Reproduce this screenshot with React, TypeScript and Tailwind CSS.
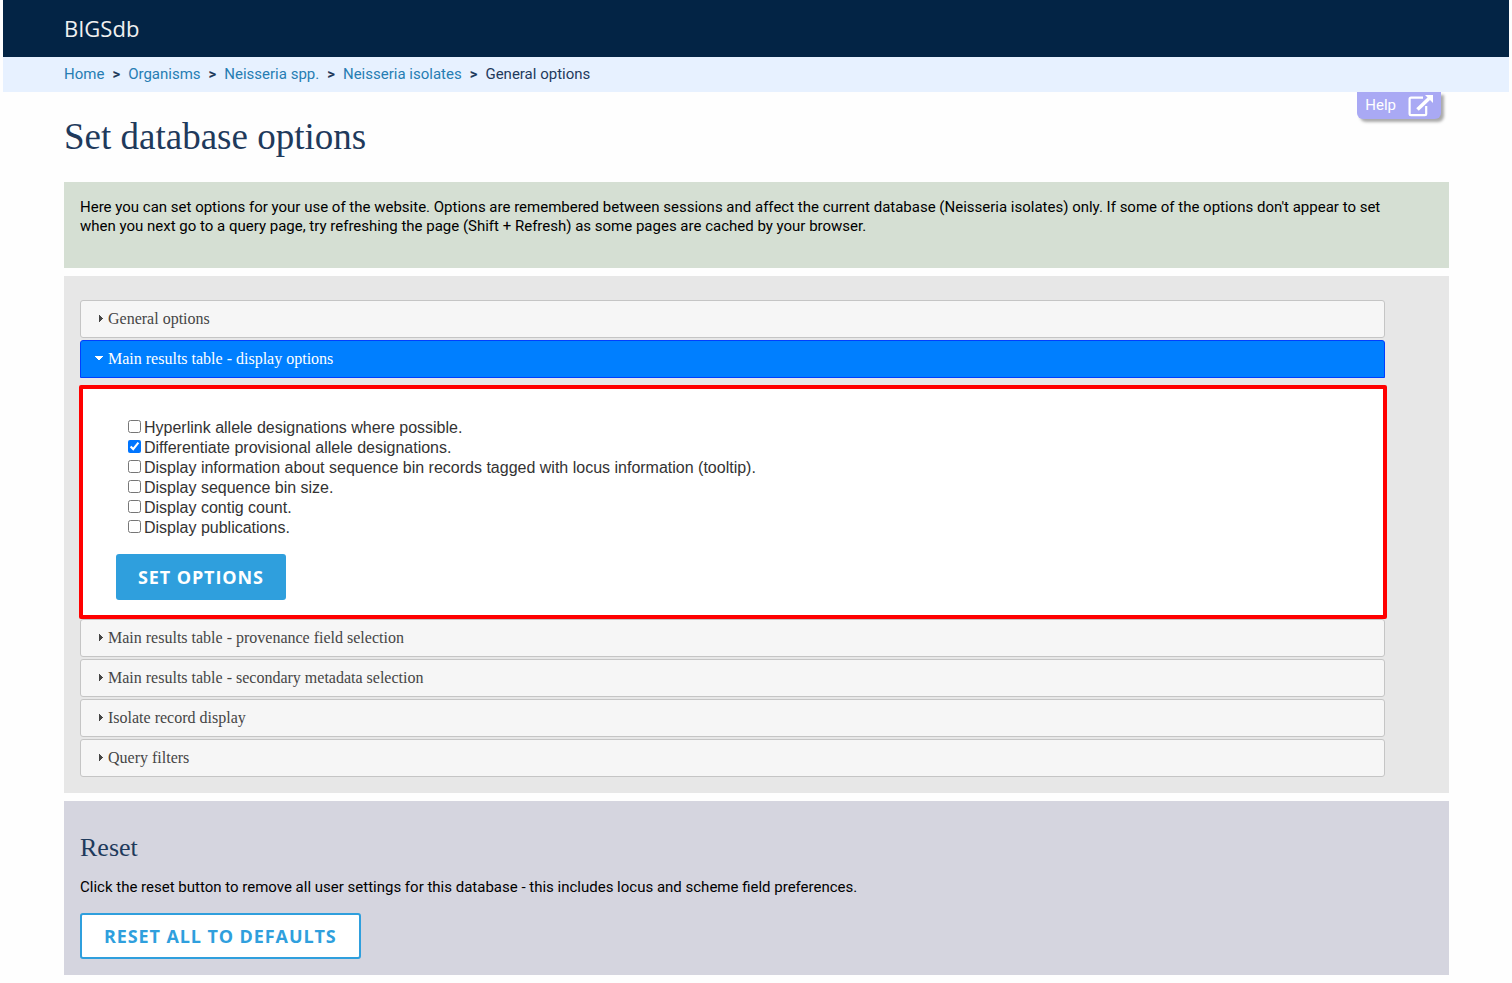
import React, { useState } from 'react';

interface DisplayOption {
  id: string;
  label: string;
}

interface SectionHeaderProps {
  title: string;
  open?: boolean;
  onClick: () => void;
}

const crumbs = ['Home', 'Organisms', 'Neisseria spp.', 'Neisseria isolates'];

const displayOptions: DisplayOption[] = [
  { id: 'hyperlink', label: 'Hyperlink allele designations where possible.' },
  { id: 'provisional', label: 'Differentiate provisional allele designations.' },
  { id: 'seqbin', label: 'Display information about sequence bin records tagged with locus information (tooltip).' },
  { id: 'binsize', label: 'Display sequence bin size.' },
  { id: 'contigs', label: 'Display contig count.' },
  { id: 'publications', label: 'Display publications.' }
];

const sections = [
  'General options',
  'Main results table - display options',
  'Main results table - provenance field selection',
  'Main results table - secondary metadata selection',
  'Isolate record display',
  'Query filters'
];

const DISPLAY_SECTION = 1;

const SectionHeader: React.FC<SectionHeaderProps> = ({ title, open = false, onClick }) => (
  <h3>
    <button
      type="button"
      aria-expanded={open}
      onClick={onClick}
      className={`flex h-[38px] w-full items-center border pl-3 text-left font-['Liberation_Serif',serif] text-base ${
        open
          ? 'rounded-t-[3px] border-[#003eff] bg-[#007fff] text-white'
          : 'rounded-[3px] border-[#c5c5c5] bg-[#f6f6f6] text-[#454545]'
      }`}
    >
      <svg width="15" height="16" viewBox="0 0 15 16" fill="currentColor" aria-hidden="true">
        {open ? <path d="M2 5h8v1H9v1H8v1H7v1H5V8H4V7H3V6H2z" /> : <path d="M6 4h1v1h1v1h1v1h1v1H9v1H8v1H7v1H6z" />}
      </svg>
      {title}
    </button>
  </h3>
);

const DisplayPanel: React.FC = () => {
  const [checked, setChecked] = useState<string[]>(['provisional']);

  const toggle = (id: string) => {
    setChecked((prev) => (prev.includes(id) ? prev.filter((c) => c !== id) : [...prev, id]));
  };

  return (
    <div className="-mr-0.5 -mb-0.5 -ml-px mt-[5px] rounded-xs border-4 border-[#ff0000] bg-white px-[33px] pt-[29px] pb-[15px]">
      <ul className="pl-3 font-['Liberation_Sans',sans-serif] text-base leading-5 text-[#333333]">
        {displayOptions.map((option) => (
          <li key={option.id} className="flex gap-[3px]">
            <input
              type="checkbox"
              id={option.id}
              checked={checked.includes(option.id)}
              onChange={() => toggle(option.id)}
              className="mt-[2px] size-[13px]"
            />
            <label htmlFor={option.id}>{option.label}</label>
          </li>
        ))}
      </ul>
      <button
        type="button"
        className="mt-4 h-[46px] rounded-[3px] bg-[#2f9fdd] px-[22px] font-['Open_Sans',sans-serif] text-lg font-bold tracking-wider text-white uppercase"
      >
        Set options
      </button>
    </div>
  );
};

const App: React.FC = () => {
  const [active, setActive] = useState<number | null>(DISPLAY_SECTION);

  return (
    <div className="min-h-screen bg-[#fefefe] px-[3px] pb-2 font-['Roboto',sans-serif] text-[15px] leading-[19px] text-black">
      <header className="flex h-[57px] items-center bg-[#032445] px-[61px] font-['Open_Sans',sans-serif] text-[22px] text-[#f0f0f0]">
        BIGSdb
      </header>

      {/* Breadcrumb trail */}
      <nav aria-label="Breadcrumb" className="flex h-[35px] items-center gap-2 bg-[#e7f1ff] px-[61px] text-[#1f3a5c]">
        {crumbs.map((crumb) => (
          <React.Fragment key={crumb}>
            <a href="#" className="text-[#267db3]">
              {crumb}
            </a>
            <span className="font-bold">&gt;</span>
          </React.Fragment>
        ))}
        <span>General options</span>
      </nav>

      <main className="mr-[60px] ml-[61px] flex flex-col gap-2">
        <div className="flex items-start justify-between pr-2">
          <h1 className="pt-[26px] pb-[18px] font-['Liberation_Serif',serif] text-[37px] leading-[38px] text-[#1f3a5c]">
            Set database options
          </h1>
          <a
            href="#"
            className="flex h-[27px] items-center gap-3 rounded-b-md bg-[#a9a9f4] px-2 text-white shadow-[3px_3px_3px_#aaaaaa]"
          >
            Help
            <svg width="25" height="22" viewBox="0 0 25 22" fill="none" stroke="currentColor" strokeWidth="2.200" aria-hidden="true">
              <path d="M15 2.600H3Q1.600 2.600 1.600 4V18.800Q1.600 20.200 3 20.200H16.800Q18.200 20.200 18.200 18.800V11" />
              <path d="M9.500 14.500L21 3.500" strokeWidth="3.600" />
              <path d="M17 0H25V8Z" fill="currentColor" stroke="none" />
            </svg>
          </a>
        </div>

        <section className="bg-[#d5dfd3] px-4 pt-4 pb-8">
          <p>
            Here you can set options for your use of the website. Options are remembered between sessions and affect the
            current database (Neisseria isolates) only. If some of the options don't appear to set
            <br />
            when you next go to a query page, try refreshing the page (Shift + Refresh) as some pages are cached by your
            browser.
          </p>
        </section>

        <section className="flex flex-col gap-0.5 bg-[#e7e7e7] pt-6 pr-16 pb-4 pl-4">
          {sections.map((title, i) => (
            <React.Fragment key={title}>
              <SectionHeader title={title} open={active === i} onClick={() => setActive(active === i ? null : i)} />
              {i === DISPLAY_SECTION && active === i && <DisplayPanel />}
            </React.Fragment>
          ))}
        </section>

        <section className="bg-[#d5d5df] px-4 pt-8 pb-4">
          <h2 className="font-['Liberation_Serif',serif] text-[26px] leading-[30px] text-[#1f3a5c]">Reset</h2>
          <p className="mt-[15px]">
            Click the reset button to remove all user settings for this database - this includes locus and scheme field
            preferences.
          </p>
          <button
            type="button"
            className="mt-4 h-[46px] rounded-[3px] border-2 border-[#2f9fdd] bg-white px-[22px] font-['Open_Sans',sans-serif] text-lg font-bold tracking-wider text-[#2f9fdd] uppercase"
          >
            Reset all to defaults
          </button>
        </section>
      </main>
    </div>
  );
};

export default App;
